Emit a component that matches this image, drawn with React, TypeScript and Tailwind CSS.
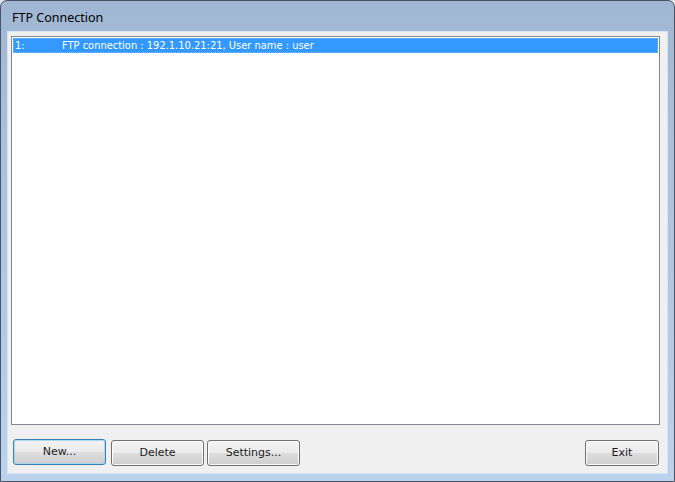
import React from 'react';

const Button: React.FC<{ label: string; width: string; primary?: boolean }> = ({ label, width, primary }) => (
  <button
    className={`${width} h-[26px] rounded-[3px] border text-[11px] text-[#1a1a1a] pt-[1px] bg-[linear-gradient(to_bottom,#f3f3f3_0%,#ebebeb_48%,#dddddd_52%,#cfcfcf_100%)] ${
      primary ? 'border-[#3c7fb1] shadow-[inset_0_0_0_1px_#a7d9f5]' : 'border-[#707070] shadow-[inset_0_0_0_1px_#fcfcfc]'
    }`}
    style={{ fontFamily: 'Tahoma, "DejaVu Sans", "Liberation Sans", sans-serif' }}
  >
    {label}
  </button>
);

const App: React.FC = () => {
  return (
    <div className="w-[675px] h-[482px] bg-[#dfe3e8]">
      <div className="w-full h-full flex flex-col rounded-t-[7px] border border-[#4a5464] bg-[linear-gradient(to_bottom,#9fb7d3_0%,#a9c1dd_30%,#bad2ee_100%)]">
        {/* Title bar */}
        <div
          className="h-[30px] pl-[11px] pt-[11px] text-[12.5px] leading-none text-black"
          style={{ fontFamily: '"Noto Sans", "Open Sans", sans-serif' }}
        >
          FTP Connection
        </div>

        {/* Client area */}
        <div className="flex-1 flex flex-col mx-[6px] mb-[7px] bg-[#f0f0f0] border border-[#d9e4f1] pl-[3px] pr-[5px] pt-[4px] pb-[7px]">
          <div className="flex-1 mr-[2px] border border-[#828790] bg-white p-[1px]">
            <div
              className="h-[15px] flex items-center bg-[#3399ff] text-white text-[11px] leading-none border border-dotted border-[#7fbfff]"
              style={{ fontFamily: 'Tahoma, "DejaVu Sans Condensed", "Liberation Sans", sans-serif' }}
            >
              <span className="w-[48px] pl-[1px]">1:</span>
              <span>FTP connection : 192.1.10.21:21, User name : user</span>
            </div>
          </div>

          <div className="mt-[13px] flex items-center pl-[2px]">
            <Button label="New..." width="w-[93px]" primary />
            <div className="ml-[5px]">
              <Button label="Delete" width="w-[93px]" />
            </div>
            <div className="ml-[3px]">
              <Button label="Settings..." width="w-[93px]" />
            </div>
            <div className="ml-auto mr-[3px]">
              <Button label="Exit" width="w-[74px]" />
            </div>
          </div>
        </div>
      </div>
    </div>
  );
};

export default App;
